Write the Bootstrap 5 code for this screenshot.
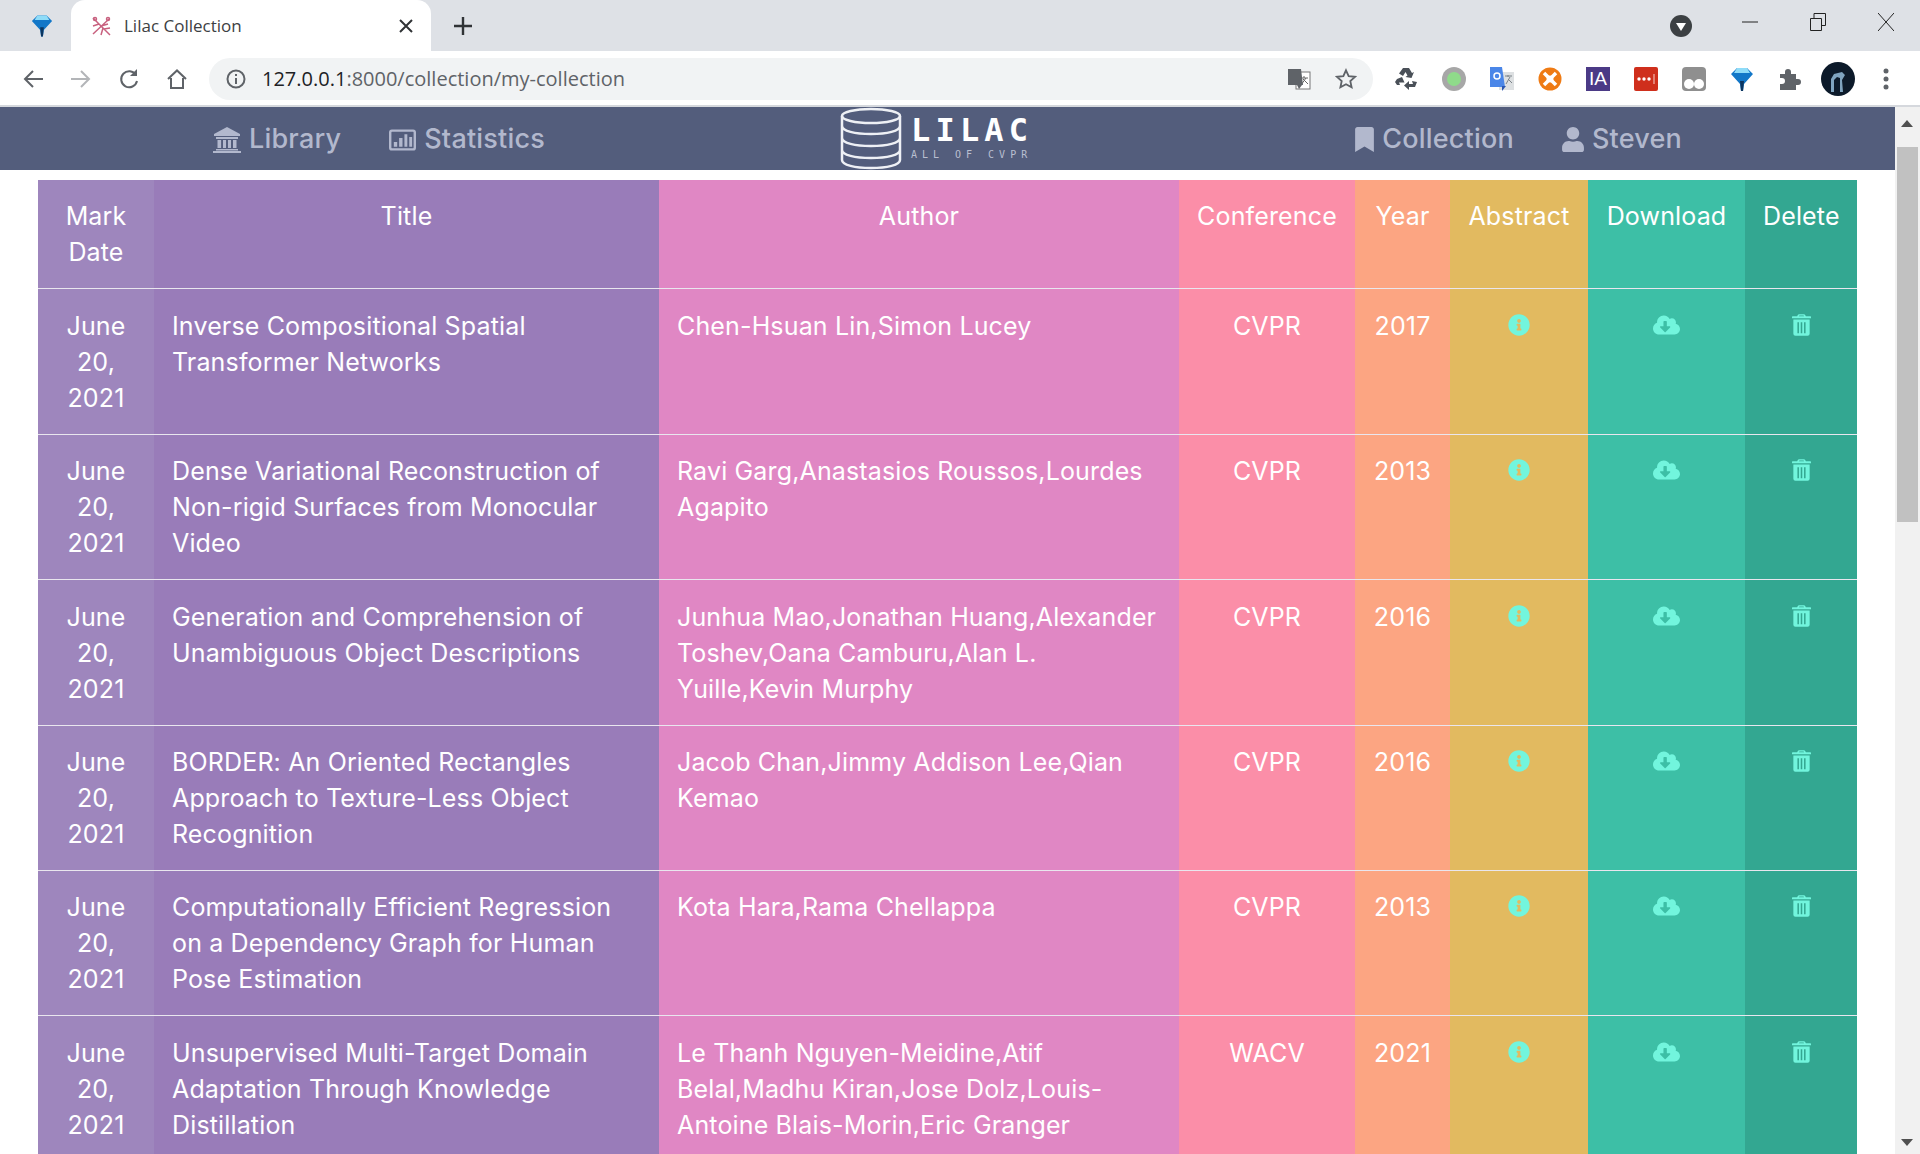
<!DOCTYPE html>
<html lang="en">
<head>
  <meta charset="UTF-8" />
  <title>Lilac Collection</title>
  <link rel="stylesheet" href="https://cdn.jsdelivr.net/npm/bootstrap@5.3.0/dist/css/bootstrap.min.css" />
  <style>
    html, body { height: 100%; overflow: hidden; background: #fff; }
    body { font-family: "Inter", "Open Sans", sans-serif; }
    /* browser frame */
    .tab-strip { height: 51px; background: #dee1e6; font-family: "Open Sans", sans-serif; }
    .pin-slot { width: 71px; padding-left: 13px; }
    .active-tab { width: 360px; height: 51px; background: #fff; border-radius: 14px 14px 0 0; padding: 0 18px 0 19px; font-size: 17px; color: #3c4043; }
    .plus-slot { width: 64px; font-size: 30px; line-height: 1; color: #3c4043; }
    .win-slot { width: 68px; }
    .tool-bar { height: 54px; background: #fff; padding: 2px 8px 0 9px; font-family: "Open Sans", sans-serif; }
    .tool-slot { width: 48px; height: 42px; flex: none; }
    .url-pill { width: 1164px; height: 42px; margin: 0 9px 0 8px; background: #f1f3f4; border-radius: 21px; padding: 0 12px 0 17px; font-size: 20px; color: #5f6368; }
    .url-pill b { font-weight: 400; color: #202124; }
    .frame-line { height: 2px; background: #d5d8dd; }
    .ia-box { width: 24px; height: 24px; background: #4b3a86; color: #fff; font: 400 19px/24px "Liberation Sans", sans-serif; text-align: center; }
    /* page */
    .page-area { height: 1047px; }
    .page-main { flex: 1; min-width: 0; overflow: hidden; }
    .scroll-rail { width: 25px; background: #f1f1f1; position: relative; }
    .scroll-thumb { position: absolute; top: 40px; left: 2px; width: 21px; height: 375px; background: #c1c1c1; }
    .scroll-up, .scroll-down { position: absolute; left: 6px; width: 0; height: 0; border-left: 6px solid transparent; border-right: 6px solid transparent; }
    .scroll-up { top: 13px; border-bottom: 7px solid #505050; }
    .scroll-down { bottom: 8px; border-top: 7px solid #505050; }
    .site-bar { height: 63px; background: #535d7c; padding: 2px 213px 0 213px; color: #b2b8cd; font-size: 27px; font-weight: 500; letter-spacing: .2px; }
    .site-bar a { color: #b2b8cd; text-decoration: none; }
    .site-bar a svg { fill: #b2b8cd; }
    .site-logo { color: #fff; margin-top: -2px; margin-left: -28px; }
    .logo-word { font: 700 32px/26px "DejaVu Sans Mono", monospace; letter-spacing: 5.2px; margin-bottom: 6px; }
    .logo-sub { font: 400 10px/12px "DejaVu Sans Mono", monospace; letter-spacing: 5px; color: #b9bfd0; }
    .table.lilac-table { width: 1819px; margin: 10px 0 0 38px; table-layout: fixed; font-size: 25px; line-height: 36px; letter-spacing: .15px; }
    .table.lilac-table > :not(caption) > * > * { padding: 18.4px 18px 18px; background: var(--cell); color: #fff; border-bottom: 1.5px solid #e9e6ee; font-weight: 400; box-shadow: none; vertical-align: top; }
    .lilac-table th, .lilac-table td.mid { text-align: center; }
    .c-date { --cell: #9e86bd; }
    .c-title { --cell: #997cb9; }
    .c-author { --cell: #e087c4; }
    .c-conf { --cell: #fb8ea8; }
    .c-year { --cell: #fca582; }
    .c-abs { --cell: #e2ba60; }
    .c-down { --cell: #3dbfa6; }
    .c-del { --cell: #33a791; }
    .cell-icon { fill: #72f5dd; display: block; margin: 6px auto 0; }
  </style>
</head>
<body>
  <svg width="0" height="0" class="d-none">
    <symbol id="ic-info" viewBox="0 0 512 512"><path d="M256 8C119 8 8 119 8 256s111 248 248 248 248-111 248-248S393 8 256 8zm0 110c23.196 0 42 18.804 42 42s-18.804 42-42 42-42-18.804-42-42 18.804-42 42-42zm56 254c0 6.627-5.373 12-12 12h-88c-6.627 0-12-5.373-12-12v-24c0-6.627 5.373-12 12-12h12v-64h-12c-6.627 0-12-5.373-12-12v-24c0-6.627 5.373-12 12-12h64c6.627 0 12 5.373 12 12v100h12c6.627 0 12 5.373 12 12v24z"/></symbol>
    <symbol id="ic-cloud" viewBox="0 0 640 512"><path d="M537.6 226.6c4.1-10.7 6.4-22.4 6.4-34.6 0-53-43-96-96-96-19.7 0-38.1 6-53.3 16.2C367 64.2 315.3 32 256 32c-88.4 0-160 71.6-160 160 0 2.7.1 5.4.2 8.1C40.2 219.8 0 273.2 0 336c0 79.5 64.5 144 144 144h368c70.7 0 128-57.3 128-128 0-61.9-44-113.6-102.4-125.4zm-132.9 88.7L299.3 420.7c-6.2 6.2-16.4 6.2-22.6 0L171.3 315.3c-10.1-10.1-2.9-27.3 11.3-27.3H248V176c0-8.8 7.2-16 16-16h48c8.8 0 16 7.2 16 16v112h65.4c14.2 0 21.4 17.2 11.3 27.3z"/></symbol>
    <symbol id="ic-trash" viewBox="0 0 448 512"><path fill-rule="evenodd" d="M32 128h384v336a48 48 0 0 1-48 48H80a48 48 0 0 1-48-48zM128 190v260h36V190zm78 0v260h36V190zm78 0v260h36V190zM16 48h104l22-36q7-12 22-12h120q15 0 22 12l22 36h104q16 0 16 16v32H0V64q0-16 16-16zM164 48h120l-10-16H174z"/></symbol>
    <symbol id="ic-bank" viewBox="0 0 28 26"><path d="M14 0 27 7v2H1V7zM3 10h22v2H3zM4.500 13h3.600v8H4.500zM10 13h3v8h-3zM15 13h3v8h-3zM20 13h3.500v8H20zM3 22h22v1.500H3zM0 24h28v2H0z"/></symbol>
    <symbol id="ic-chart" viewBox="0 0 28 22"><path fill-rule="evenodd" d="M3 0h22a3 3 0 0 1 3 3v16a3 3 0 0 1-3 3H3a3 3 0 0 1-3-3V3a3 3 0 0 1 3-3zm0 2.500a.5.5 0 0 0-.5.5v16a.5.5 0 0 0 .5.5h22a.5.5 0 0 0 .5-.5V3a.5.5 0 0 0-.5-.5zM5 13h3.500v5H5zM10.500 9H14v9h-3.500zM16 5h3v13h-3zM21 8h3v10h-3z"/></symbol>
    <symbol id="ic-mark" viewBox="0 0 384 512"><path d="M0 512V48C0 21.49 21.49 0 48 0h288c26.51 0 48 21.49 48 48v464L192 400 0 512z"/></symbol>
    <symbol id="ic-user" viewBox="0 0 448 512"><path d="M224 256c70.7 0 128-57.3 128-128S294.700 0 224 0 96 57.300 96 128s57.300 128 128 128zm89.600 32h-16.700c-22.200 10.200-46.900 16-72.900 16s-50.600-5.800-72.900-16h-16.700C60.200 288 0 348.200 0 422.400V464c0 26.500 21.500 48 48 48h352c26.500 0 48-21.500 48-48v-41.600c0-74.200-60.200-134.400-134.400-134.400z"/></symbol>
    <symbol id="ic-gem" viewBox="0 0 24 26"><path fill="#1277c8" d="M1 8 7 2h10l6 6-9 10-1 7h-2l-1-7z"/><path fill="#8fdcf8" d="M7 2h10l3 5H4z"/><path fill="#0b3560" d="M10 15h4l-1 10h-2z"/></symbol>
  </svg>

  <!-- tabs -->
  <div class="tab-strip d-flex align-items-center">
    <div class="pin-slot d-flex justify-content-center"><svg width="22" height="25"><use href="#ic-gem"/></svg></div>
    <div class="active-tab d-flex align-items-center">
      <svg width="22" height="22" viewBox="0 0 22 22" fill="none" stroke="#c8617f" stroke-width="1.500">
        <path d="M3 3 20 20M19 4 3 19M11 11l7-2M9 9 3 11M13 13l-2 7M14 14l6-1"/><circle cx="18" cy="4" r="1.500"/><circle cx="5" cy="4" r="1.500"/>
      </svg>
      <span class="ms-2 ps-1 flex-grow-1">Lilac Collection</span>
      <svg width="14" height="14" viewBox="0 0 14 14" stroke="#303336" stroke-width="2"><path d="M1 1 13 13M13 1 1 13"/></svg>
    </div>
    <div class="plus-slot d-flex justify-content-center">
      <svg width="20" height="20" viewBox="0 0 20 20" stroke="#303336" stroke-width="2.400"><path d="M10 1v18M1 10h18"/></svg>
    </div>
    <div class="flex-grow-1"></div>
    <svg width="22" height="22" viewBox="0 0 22 22" class="me-4"><circle cx="11" cy="11" r="11" fill="#3c4043"/><path d="M6 8h10l-5 8z" fill="#fff"/></svg>
    <div class="win-slot d-flex justify-content-center mb-2"><svg width="16" height="2"><path d="M0 1h16" stroke="#222"/></svg></div>
    <div class="win-slot d-flex justify-content-center mb-2"><svg width="16" height="18" viewBox="0 0 16 18" fill="none" stroke="#222"><path d="M.5 5.500h11v12H.5zM4 5.500V.5h11.500v12H11.500"/></svg></div>
    <div class="win-slot d-flex justify-content-center mb-2"><svg width="16" height="18" viewBox="0 0 16 18" stroke="#222"><path d="M0 0 16 18M16 0 0 18"/></svg></div>
  </div>

  <!-- toolbar -->
  <div class="tool-bar d-flex align-items-center">
    <div class="tool-slot d-flex align-items-center justify-content-center"><svg width="20" height="20" viewBox="0 0 20 20" fill="none" stroke="#5f6368" stroke-width="2"><path d="M20 10H2M10 2 2 10l8 8"/></svg></div>
    <div class="tool-slot d-flex align-items-center justify-content-center"><svg width="20" height="20" viewBox="0 0 20 20" fill="none" stroke="#b3b5b8" stroke-width="2"><path d="M0 10h18M10 2l8 8-8 8"/></svg></div>
    <div class="tool-slot d-flex align-items-center justify-content-center"><svg width="20" height="22" viewBox="0 0 20 22" fill="none" stroke="#5f6368" stroke-width="2"><path d="M17 7a8 8 0 1 0 1 6"/><path d="M18 1v7h-7" fill="#5f6368" stroke="none"/></svg></div>
    <div class="tool-slot d-flex align-items-center justify-content-center"><svg width="20" height="20" viewBox="0 0 20 20" fill="none" stroke="#5f6368" stroke-width="2"><path d="M1 10 10 1.500 19 10M4 9v10h12V9"/></svg></div>
    <div class="url-pill d-flex align-items-center">
      <svg width="20" height="20" viewBox="0 0 20 20" fill="none" stroke="#5f6368" stroke-width="2"><circle cx="10" cy="10" r="8.500"/><path d="M10 9v6M10 5v2"/></svg>
      <span class="ms-3 flex-grow-1"><b>127.0.0.1</b>:8000/collection/my-collection</span>
      <svg width="24" height="24" viewBox="0 0 24 24" class="me-4"><rect x="9" y="5" width="14" height="17" fill="#fff" stroke="#777"/><path d="M13 11h8M17 9v2M14 18l5-7M16 12l5 5" stroke="#666" fill="none"/><path d="M1 2h13l2 16H1z" fill="#5f6368"/><path d="M10 18h5l-3 4z" fill="#5f6368"/></svg>
      <svg width="22" height="22" viewBox="0 0 24 24" fill="none" stroke="#5f6368" stroke-width="2" class="me-1"><path d="M12 2.500l2.900 6.300 6.900.8-5.100 4.700 1.400 6.800-6.100-3.400-6.100 3.400 1.400-6.800L2.200 9.600l6.900-.8z"/></svg>
    </div>
    <!-- extensions -->
    <div class="tool-slot d-flex align-items-center justify-content-center"><svg width="24" height="24" viewBox="0 0 24 24" fill="#4a5058"><path d="M9 1h6l3 5 2-1-2.500 6-6-1 2-1.500L11.500 5 9 9 5 6.500zM3 12l5-2 2.500 5.500H5l1 2.500H3L1 15zM23 15l-2 5h-6v3l-5-4.500 5-4.500v3h4l-1-3z"/></svg></div>
    <div class="tool-slot d-flex align-items-center justify-content-center"><svg width="24" height="24" viewBox="0 0 24 24"><circle cx="12" cy="12" r="12" fill="#a7a7a7"/><circle cx="12" cy="12" r="7" fill="#8fdb8a"/></svg></div>
    <div class="tool-slot d-flex align-items-center justify-content-center"><svg width="24" height="24" viewBox="0 0 24 24"><rect x="9" y="5" width="15" height="18" fill="#dde0e2"/><path d="M15 9h7M18 8v2M16 17l4-7M18 12l4 4" stroke="#7b8288" fill="none"/><path d="M0 0h12l3 20H0z" fill="#4a86e8"/><path d="M12 19h4l-4 5z" fill="#2a56b0"/><circle cx="7" cy="9" r="3" fill="none" stroke="#fff" stroke-width="1.500"/></svg></div>
    <div class="tool-slot d-flex align-items-center justify-content-center"><svg width="24" height="24" viewBox="0 0 24 24"><circle cx="12" cy="12" r="11.500" fill="#ef7b14"/><circle cx="12" cy="12" r="3.500" fill="#fff"/><path d="M6 6l4 4M18 6l-4 4M6 18l4-4M18 18l-4-4" stroke="#fff" stroke-width="3.500"/></svg></div>
    <div class="tool-slot d-flex align-items-center justify-content-center"><div class="ia-box">IA</div></div>
    <div class="tool-slot d-flex align-items-center justify-content-center"><svg width="24" height="24" viewBox="0 0 24 24"><rect width="24" height="24" rx="2" fill="#cf2f1c"/><circle cx="5" cy="12" r="1.700" fill="#fff"/><circle cx="10" cy="12" r="1.700" fill="#fff"/><circle cx="15" cy="12" r="1.700" fill="#fff"/><path d="M20 7v10" stroke="#f2b8ae" stroke-width="1.200"/></svg></div>
    <div class="tool-slot d-flex align-items-center justify-content-center"><svg width="24" height="24" viewBox="0 0 24 24"><rect width="24" height="24" rx="4" fill="#8f8f8f"/><circle cx="7" cy="17" r="5" fill="#fff"/><circle cx="17" cy="17" r="5" fill="#fff"/></svg></div>
    <div class="tool-slot d-flex align-items-center justify-content-center"><svg width="24" height="26"><use href="#ic-gem"/></svg></div>
    <div class="tool-slot d-flex align-items-center justify-content-center"><svg width="22" height="22" viewBox="0 0 22 22" fill="#5f6368"><path d="M1 6h5V4a3 3 0 0 1 6 0v2h5v5h2a3 3 0 0 1 0 6h-2v5H1v-6h2a3 3 0 0 0 0-6H1z"/></svg></div>
    <div class="tool-slot d-flex align-items-center justify-content-center"><svg width="34" height="34" viewBox="0 0 34 34"><circle cx="17" cy="17" r="17" fill="#0c1a2a"/><path d="M10 30V17l3-5 8-2 3 3-3 5 1 12z" fill="#7fa4c0"/><path d="M13 30V18l3-3 3 1v14z" fill="#0c1a2a"/></svg></div>
    <div class="tool-slot d-flex align-items-center justify-content-center"><svg width="6" height="22" fill="#5f6368"><circle cx="3" cy="3" r="2.500"/><circle cx="3" cy="11" r="2.500"/><circle cx="3" cy="19" r="2.500"/></svg></div>
  </div>
  <div class="frame-line"></div>

  <div class="page-area d-flex">
    <div class="page-main">
      <nav class="site-bar d-flex align-items-center justify-content-between">
        <div class="d-flex align-items-center gap-5">
          <a href="#" class="d-flex align-items-center gap-2"><svg width="28" height="26"><use href="#ic-bank"/></svg>Library</a>
          <a href="#" class="d-flex align-items-center gap-2"><svg width="27" height="22"><use href="#ic-chart"/></svg>Statistics</a>
        </div>
        <div class="site-logo d-flex align-items-center gap-2">
          <svg width="64" height="63" viewBox="0 0 64 63" fill="none" stroke="#eef0f5" stroke-width="2.500">
            <ellipse cx="32" cy="9" rx="29" ry="7"/>
            <path d="M3 9v10c0 5 13 8 29 8s29-3 29-8V9M3 19v12c0 5 13 8 29 8s29-3 29-8V19M3 31v12c0 5 13 8 29 8s29-3 29-8V31M3 43v10c0 5 13 8 29 8s29-3 29-8V43"/>
          </svg>
          <div>
            <div class="logo-word">LILAC</div>
            <div class="logo-sub">ALL OF CVPR</div>
          </div>
        </div>
        <div class="d-flex align-items-center gap-5">
          <a href="#" class="d-flex align-items-center gap-2"><svg width="19" height="25"><use href="#ic-mark"/></svg>Collection</a>
          <a href="#" class="d-flex align-items-center gap-2"><svg width="22" height="25"><use href="#ic-user"/></svg>Steven</a>
        </div>
      </nav>
      <table class="table lilac-table mb-0">
        <colgroup>
          <col style="width:116px"><col style="width:505px"><col style="width:520px"><col style="width:176px">
          <col style="width:95px"><col style="width:138px"><col style="width:157px"><col style="width:112px">
        </colgroup>
        <thead>
          <tr>
            <th class="c-date">Mark Date</th><th class="c-title">Title</th><th class="c-author">Author</th><th class="c-conf">Conference</th>
            <th class="c-year">Year</th><th class="c-abs">Abstract</th><th class="c-down">Download</th><th class="c-del">Delete</th>
          </tr>
        </thead>
        <tbody id="paperRows"></tbody>
      </table>
    </div>
    <div class="scroll-rail">
      <div class="scroll-up"></div>
      <div class="scroll-thumb"></div>
      <div class="scroll-down"></div>
    </div>
  </div>

  <script src="https://cdn.jsdelivr.net/npm/bootstrap@5.3.0/dist/js/bootstrap.bundle.min.js"></script>
  <script>
    const papers = [
      ["Inverse Compositional Spatial Transformer Networks", "Chen-Hsuan Lin,Simon Lucey", "CVPR", "2017"],
      ["Dense Variational Reconstruction of Non-rigid Surfaces from Monocular Video", "Ravi Garg,Anastasios Roussos,Lourdes Agapito", "CVPR", "2013"],
      ["Generation and Comprehension of Unambiguous Object Descriptions", "Junhua Mao,Jonathan Huang,Alexander Toshev,Oana Camburu,Alan L. Yuille,Kevin Murphy", "CVPR", "2016"],
      ["BORDER: An Oriented Rectangles Approach to Texture-Less Object Recognition", "Jacob Chan,Jimmy Addison Lee,Qian Kemao", "CVPR", "2016"],
      ["Computationally Efficient Regression on a Dependency Graph for Human Pose Estimation", "Kota Hara,Rama Chellappa", "CVPR", "2013"],
      ["Unsupervised Multi-Target Domain Adaptation Through Knowledge Distillation", "Le Thanh Nguyen-Meidine,Atif Belal,Madhu Kiran,Jose Dolz,Louis-Antoine Blais-Morin,Eric Granger", "WACV", "2021"]
    ];

    document.getElementById("paperRows").innerHTML = papers.map((p) => `
      <tr>
        <td class="c-date mid">June 20, 2021</td>
        <td class="c-title">${p[0]}</td>
        <td class="c-author">${p[1]}</td>
        <td class="c-conf mid">${p[2]}</td>
        <td class="c-year mid">${p[3]}</td>
        <td class="c-abs"><svg class="cell-icon" width="22" height="22"><use href="#ic-info"/></svg></td>
        <td class="c-down"><svg class="cell-icon" width="27" height="22"><use href="#ic-cloud"/></svg></td>
        <td class="c-del"><svg class="cell-icon" width="19" height="22"><use href="#ic-trash"/></svg></td>
      </tr>`).join("");
  </script>
</body>
</html>
